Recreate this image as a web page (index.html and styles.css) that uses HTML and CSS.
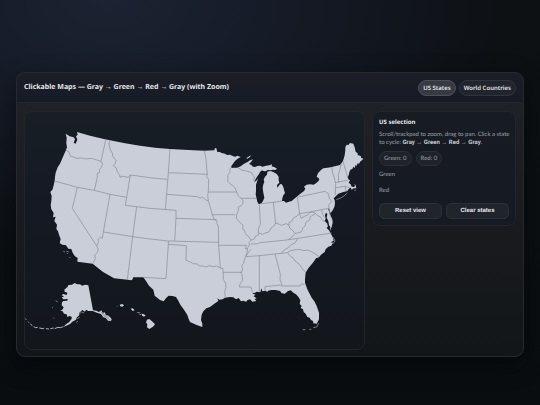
FILE: index.html
```html
<!DOCTYPE html>
<html lang="en">
<head>
<meta charset="utf-8">
<title>Clickable Maps</title>
<link rel="stylesheet" href="styles.css">
</head>
<body>
<main class="card">
  <header class="header">
    <h1 class="title">Clickable Maps — Gray → Green → Red → Gray (with Zoom)</h1>
    <nav class="tabs">
      <button class="tab active" type="button">US States</button>
      <button class="tab" type="button">World Countries</button>
    </nav>
  </header>
  <div class="content">
    <section class="map" aria-label="Map of US states">
      <svg viewBox="75 333 1017 711" role="img" aria-label="United States">
        <!-- Mainland -->
        <path class="land" d="M231 393L270 404 315 415 375 427 420 434 465 440 510 444 580 448 613 449 643 448 645 441 649 442 652 453 659 453 665 456 675 458 681 462 690 461 700 466 706 467 712 464 722 468 713 473 705 480 699 488 694 495 694 501 702 500 712 500 722 496 730 490 738 485 744 482 750 478 759 475 753 483 747 489 753 491 759 497 765 498 773 495 780 494 788 497 798 494 808 493 816 490 815 496 824 499 831 503 826 507 819 506 812 508 803 507 797 511 790 510 786 508 780 513 777 519 772 526 767 534 763 544 770 538 774 532 771 542 768 551 768 570 767 580 770 593 772 602 776 609 783 608 789 600 793 590 790 575 788 561 790 550 793 543 791 535 796 526 801 521 802 512 811 510 820 513 830 519 836 527 836 538 838 545 831 552 832 560 840 550 845 549 850 558 853 570 855 576 850 583 847 592 846 600 852 600 858 605 867 602 875 600 883 593 892 586 903 577 912 570 916 563 912 557 920 551 930 550 941 551 950 545 958 537 956 531 950 528 952 521 955 515 963 507 970 502 983 500 995 498 1020 492 1029 480 1034 463 1036 447 1036 438 1040 431 1045 432 1050 426 1060 428 1064 439 1067 452 1073 457 1073 462 1082 465 1084 471 1090 473 1086 478 1080 482 1077 489 1073 486 1070 495 1067 491 1064 501 1060 497 1057 504 1051 506 1048 514 1046 523 1043 529 1045 535 1050 538 1046 545 1052 550 1055 557 1062 558 1066 554 1062 549 1067 552 1069 562 1061 562 1055 566 1052 560 1048 562 1042 570 1030 573 1015 578 1008 585 1001 592 1004 597 1005 608 1003 618 998 628 992 636 989 630 987 621 985 624 989 639 997 655 998 665 995 678 990 690 991 678 987 673 985 660 980 650 982 639 978 635 975 642 977 653 974 660 981 667 984 676 980 681 987 688 992 697 998 709 1001 719 992 724 999 725 994 734 985 737 977 745 974 753 963 761 957 769 948 772 941 782 935 790 928 798 923 805 917 815 915 835 915 845 922 865 935 890 944 902 950 915 957 935 957 955 950 968 940 967 939 960 933 957 929 950 922 948 917 938 911 933 909 925 902 921 905 915 899 909 901 898 896 889 888 880 880 875 872 868 863 871 855 878 845 877 840 870 827 867 815 867 804 869 802 873 797 869 787 871 784 862 781 874 770 872 766 875 756 876 766 881 761 886 770 892 764 894 769 900 757 902 750 895 743 897 738 902 730 899 723 901 716 891 708 895 700 889 690 888 675 890 668 895 658 896 652 892 655 900 645 907 630 918 619 922 610 931 605 941 603 957 607 968 607 978 590 972 570 963 565 951 562 942 552 926 541 911 535 899 528 888 518 885 506 884 499 890 491 901 480 897 464 884 460 866 447 854 438 840 430 829 400 829 396 838 342 832 308 812 278 788 232 782 233 771 224 765 218 755 214 744 205 743 198 733 187 731 179 726 182 714 178 704 174 691 169 684 171 671 163 660 167 647 159 649 161 636 154 625 152 612 154 600 155 585 151 573 158 565 164 540 165 527 167 515 173 499 180 488 190 465 198 447 201 439 199 427 200 410 197 398 209 406 221 409 225 415 221 425 227 428 232 416 228 406 233 401ZM739 472L745 467 753 463 750 468 742 473Z"/>
        <!-- State borders -->
        <path class="border" d="M197 447L206 452 212 466 221 468 228 472 245 471 258 474 275 472 290 477 303 481M317 417L303 481 308 490 304 499 298 506 299 515 292 517 292 528 283 568M164 540L232 559 283 568 330 580 380 589M328 419L327 431 331 447 338 457 337 465 348 478 345 488 340 494 348 500 353 514 359 521 360 529 368 526 386 529 391 522M391 522L376 613 450 622 528 628M391 522L465 532 501 535M510 444L505 515 496 625M505 515L622 520M500 580L593 587 600 591 608 589 618 597 625 600M613 449L618 475 620 500 622 520 620 527 626 535 625 573 623 583 625 600 630 615 637 641 643 655 652 661 650 667 655 675 656 735 661 801M625 573H710M694 499L690 504 690 514 683 523 684 532 683 541 693 550 704 559 710 573 714 583 722 591 729 598 729 607 722 615 715 618 715 629 710 641 709 652 719 664 729 672 728 685 733 688 736 698 747 708 753 718 747 724 748 733 742 742 742 752 738 765 733 776 731 787 725 794 728 805 724 815 727 826 728 838 720 849 718 858H753L757 873M722 592L768 592M713 499L725 507 743 511 755 515 758 523 763 527 762 541M637 641H706M410 617L398 707 382 836M330 580L310 693 307 712 302 709 295 714 295 724 290 735 295 744 292 754 284 762 286 774 278 788M232 559L217 622 290 735M310 693L398 707 450 714 505 720 657 724M528 628L528 652 524 720M528 652L650 656M505 720L505 730 498 833 430 829M505 730L559 734 558 778 569 782 580 788 592 789 598 795 610 795 617 798 628 794 640 797 650 795 661 801 669 803 670 835 677 847 678 860 674 871 676 890M670 814H725M656 733H740L735 743H743M752 718L764 713 765 706 774 703 777 696 788 700 795 696 807 693 813 681 823 674 825 667 832 667 844 673 859 668 867 673 867 664 875 661 881 650 892 645 897 637M778 610L781 670 775 684 775 698M780 608L820 604 846 600M820 604L827 668M892 588L899 638 940 631 985 622M895 588L975 571 985 578 988 592 995 602 986 612 987 621M995 498L998 517 1003 530 1007 548 1006 582M1024 488L1020 505 1015 520 1016 544M1005 545L1042 538M1029 481L1038 512 1044 532M1007 560L1036 556 1048 560M1035 557L1038 571M867 673L869 681 875 685 885 697 894 696 905 692 908 681 915 675 919 662 929 657 931 647 942 641 947 637M898 638L904 652 913 646 922 643 929 635 937 633 946 637 952 644 961 647 966 657 977 663M965 627L967 636 973 649M885 697L876 708 865 716M752 729L775 728 780 725 860 717 920 708 995 696M737 767L778 764 862 755M845 757L851 748 865 740 873 731 885 726 893 713M862 755L872 749 885 746 903 746 909 749 922 747 933 751 958 767M863 756L868 763 880 772 885 780 898 790 907 803 917 815M778 764L778 873M825 759L838 808 841 820 840 836 847 853M795 869V857L840 852 847 855 900 855 904 849 913 850M738 765L752 745"/>
        <path class="coast" d="M1009 596L1020 592 1032 585 1042 576M988 629L991 646 996 660M940 980L950 978 956 966M928 985H934M908 986H916M999 708L1005 720 998 729M1063 568L1068 567"/>
        <!-- Alaska -->
        <path class="land" d="M193 866L203 857 205 852 216 851 224 846 231 850 240 850 246 854 256 851 265 853 279 928 289 929 297 933 304 928 308 936 314 934 318 942 326 944 335 954 333 960 324 959 317 951 310 949 303 939 291 935 278 930 265 930 258 926 255 932 247 927 238 935 237 944 231 948 228 956 217 962 210 969 199 974 190 978 198 970 208 963 215 953 215 947 208 945 202 948 200 940 192 938 188 931 181 929 187 926 191 919 185 913 186 904 190 900 202 899 203 894 190 895 185 889 192 887 185 882 190 879 200 882 202 875 194 872Z"/>
        <path class="chain" d="M75 952L79 956M84 962L87 965M91 969L97 974M101 977L107 980 113 979M118 981L130 983 133 981M138 983L147 984M151 983L161 981M164 983L174 979 181 980 190 977"/>
        <path class="coast" d="M232 953L239 949M229 965L233 960M167 899L173 903M156 920H159M160 950L162 953M238 939L245 933 252 936M303 932L318 952"/>
        <path class="border" d="M301 931L311 942 323 954M308 935L320 949 331 957M315 940L327 949"/>
        <!-- Hawaii -->
        <path class="land" d="M359 911L367 909 372 913 367 917 361 916ZM350 916L352 914 352 917ZM392 923L398 922 404 928 398 930ZM412 934L421 935 420 937 412 936ZM418 939L423 940 421 943ZM424 938L430 939 437 943 432 947 427 944ZM441 956L448 954 456 961 465 970 459 977 448 984 441 979 442 970 438 964Z"/>
        <!-- Channel islands -->
        <path class="coast" d="M190 751L195 753M199 751L206 753M208 768L211 771M201 756L203 759"/>
      </svg>
    </section>
    <aside class="panel">
      <h2 class="panel-title">US selection</h2>
      <p class="hint">Scroll/trackpad to zoom, drag to pan. Click a state to cycle: <b>Gray → Green → Red → Gray</b>.</p>
      <div class="counts">
        <span class="count">Green: 0</span>
        <span class="count">Red: 0</span>
      </div>
      <h3 class="group">Green</h3>
      <h3 class="group">Red</h3>
      <div class="actions">
        <button class="action" type="button">Reset view</button>
        <button class="action" type="button">Clear states</button>
      </div>
    </aside>
  </div>
</main>
</body>
</html>
```
FILE: styles.css
```css
* {
  box-sizing: border-box;
}

body {
  margin: 0;
  min-height: 100vh;
  padding: 72px 16px 48px;
  color: #e5e7eb;
  font-family: "Noto Sans", sans-serif;
  text-rendering: geometricPrecision;
  background:
    radial-gradient(400px 260px at 20% 0%, #1b2332 0%, #151a26 45%, transparent 100%),
    linear-gradient(#0d1114, #090d10);
}

.card {
  overflow: hidden;
  border: 1px solid #262a30;
  border-radius: 9px;
  background: linear-gradient(#202329, #1a1b1e 50%, #121619);
  box-shadow: 0 8px 24px rgba(0, 0, 0, .45);
}

.header {
  display: flex;
  align-items: center;
  justify-content: space-between;
  padding: 7px 7px 6px;
  border-bottom: 1px solid #23262f;
  background: linear-gradient(#1b1e27, #171b25);
}

.title {
  margin: 0;
  font-size: 7px;
  line-height: 12px;
  font-weight: 700;
}

.tabs {
  display: flex;
  gap: 3px;
}

.tab {
  padding: 0 4px;
  height: 16px;
  border: 1px solid #30343b;
  border-radius: 8px;
  background: #20242b;
  color: inherit;
  font: 600 6px/14px "Noto Sans", sans-serif;
  text-rendering: inherit;
}

.tab.active {
  border-color: #4b4f57;
  background: #373a42;
}

.content {
  display: grid;
  grid-template-columns: minmax(0, 1fr) 144px;
  align-items: start;
  gap: 7px;
  padding: 8px 7px 6px;
}

.map,
.panel {
  border: 1px solid #20262c;
  border-radius: 8px;
}

.map {
  overflow: hidden;
  background: linear-gradient(#181e26, #141923 40%, #13171c);
}

.map svg {
  display: block;
  width: 100%;
}

.land {
  fill: #c9ced8;
}

.border,
.coast,
.chain {
  fill: none;
  stroke-linejoin: round;
}

.border {
  stroke: #858a95;
  stroke-width: 2;
}

.coast {
  stroke: #abb0ba;
  stroke-width: 2;
}

.chain {
  stroke: #aeb3bd;
  stroke-width: 3;
}

.panel {
  padding: 6px 3px 6px 6px;
  background: linear-gradient(#171b22, #151a23);
}

.panel-title {
  margin: 0 0 4px;
  font-size: 6px;
  line-height: 9px;
  font-weight: 700;
}

.hint,
.count,
.group {
  color: #9aa0ab;
  font-family: Lato, "Noto Sans", sans-serif;
  font-size: 6px;
}

.hint {
  margin: 0;
  line-height: 8px;
}

.hint b {
  color: #c3c8d1;
  font-family: Roboto, "Noto Sans", sans-serif;
}

.counts {
  display: flex;
  gap: 4px;
  margin: 4px 0 5px;
}

.count {
  padding: 0 4px;
  border: 1px solid #2b3037;
  border-radius: 8px;
  background: #1f2329;
  line-height: 13px;
}

.group {
  margin: 0 0 8px;
  line-height: 8px;
  font-weight: 400;
}

.actions {
  display: grid;
  grid-template-columns: 1fr 1fr;
  gap: 4px;
  margin-right: 3px;
}

.action {
  height: 16px;
  padding: 0;
  border: 1px solid #2b3037;
  border-radius: 5px;
  background: #20242b;
  color: inherit;
  font: 700 6px/14px "Liberation Sans", sans-serif;
  text-rendering: inherit;
}
```
